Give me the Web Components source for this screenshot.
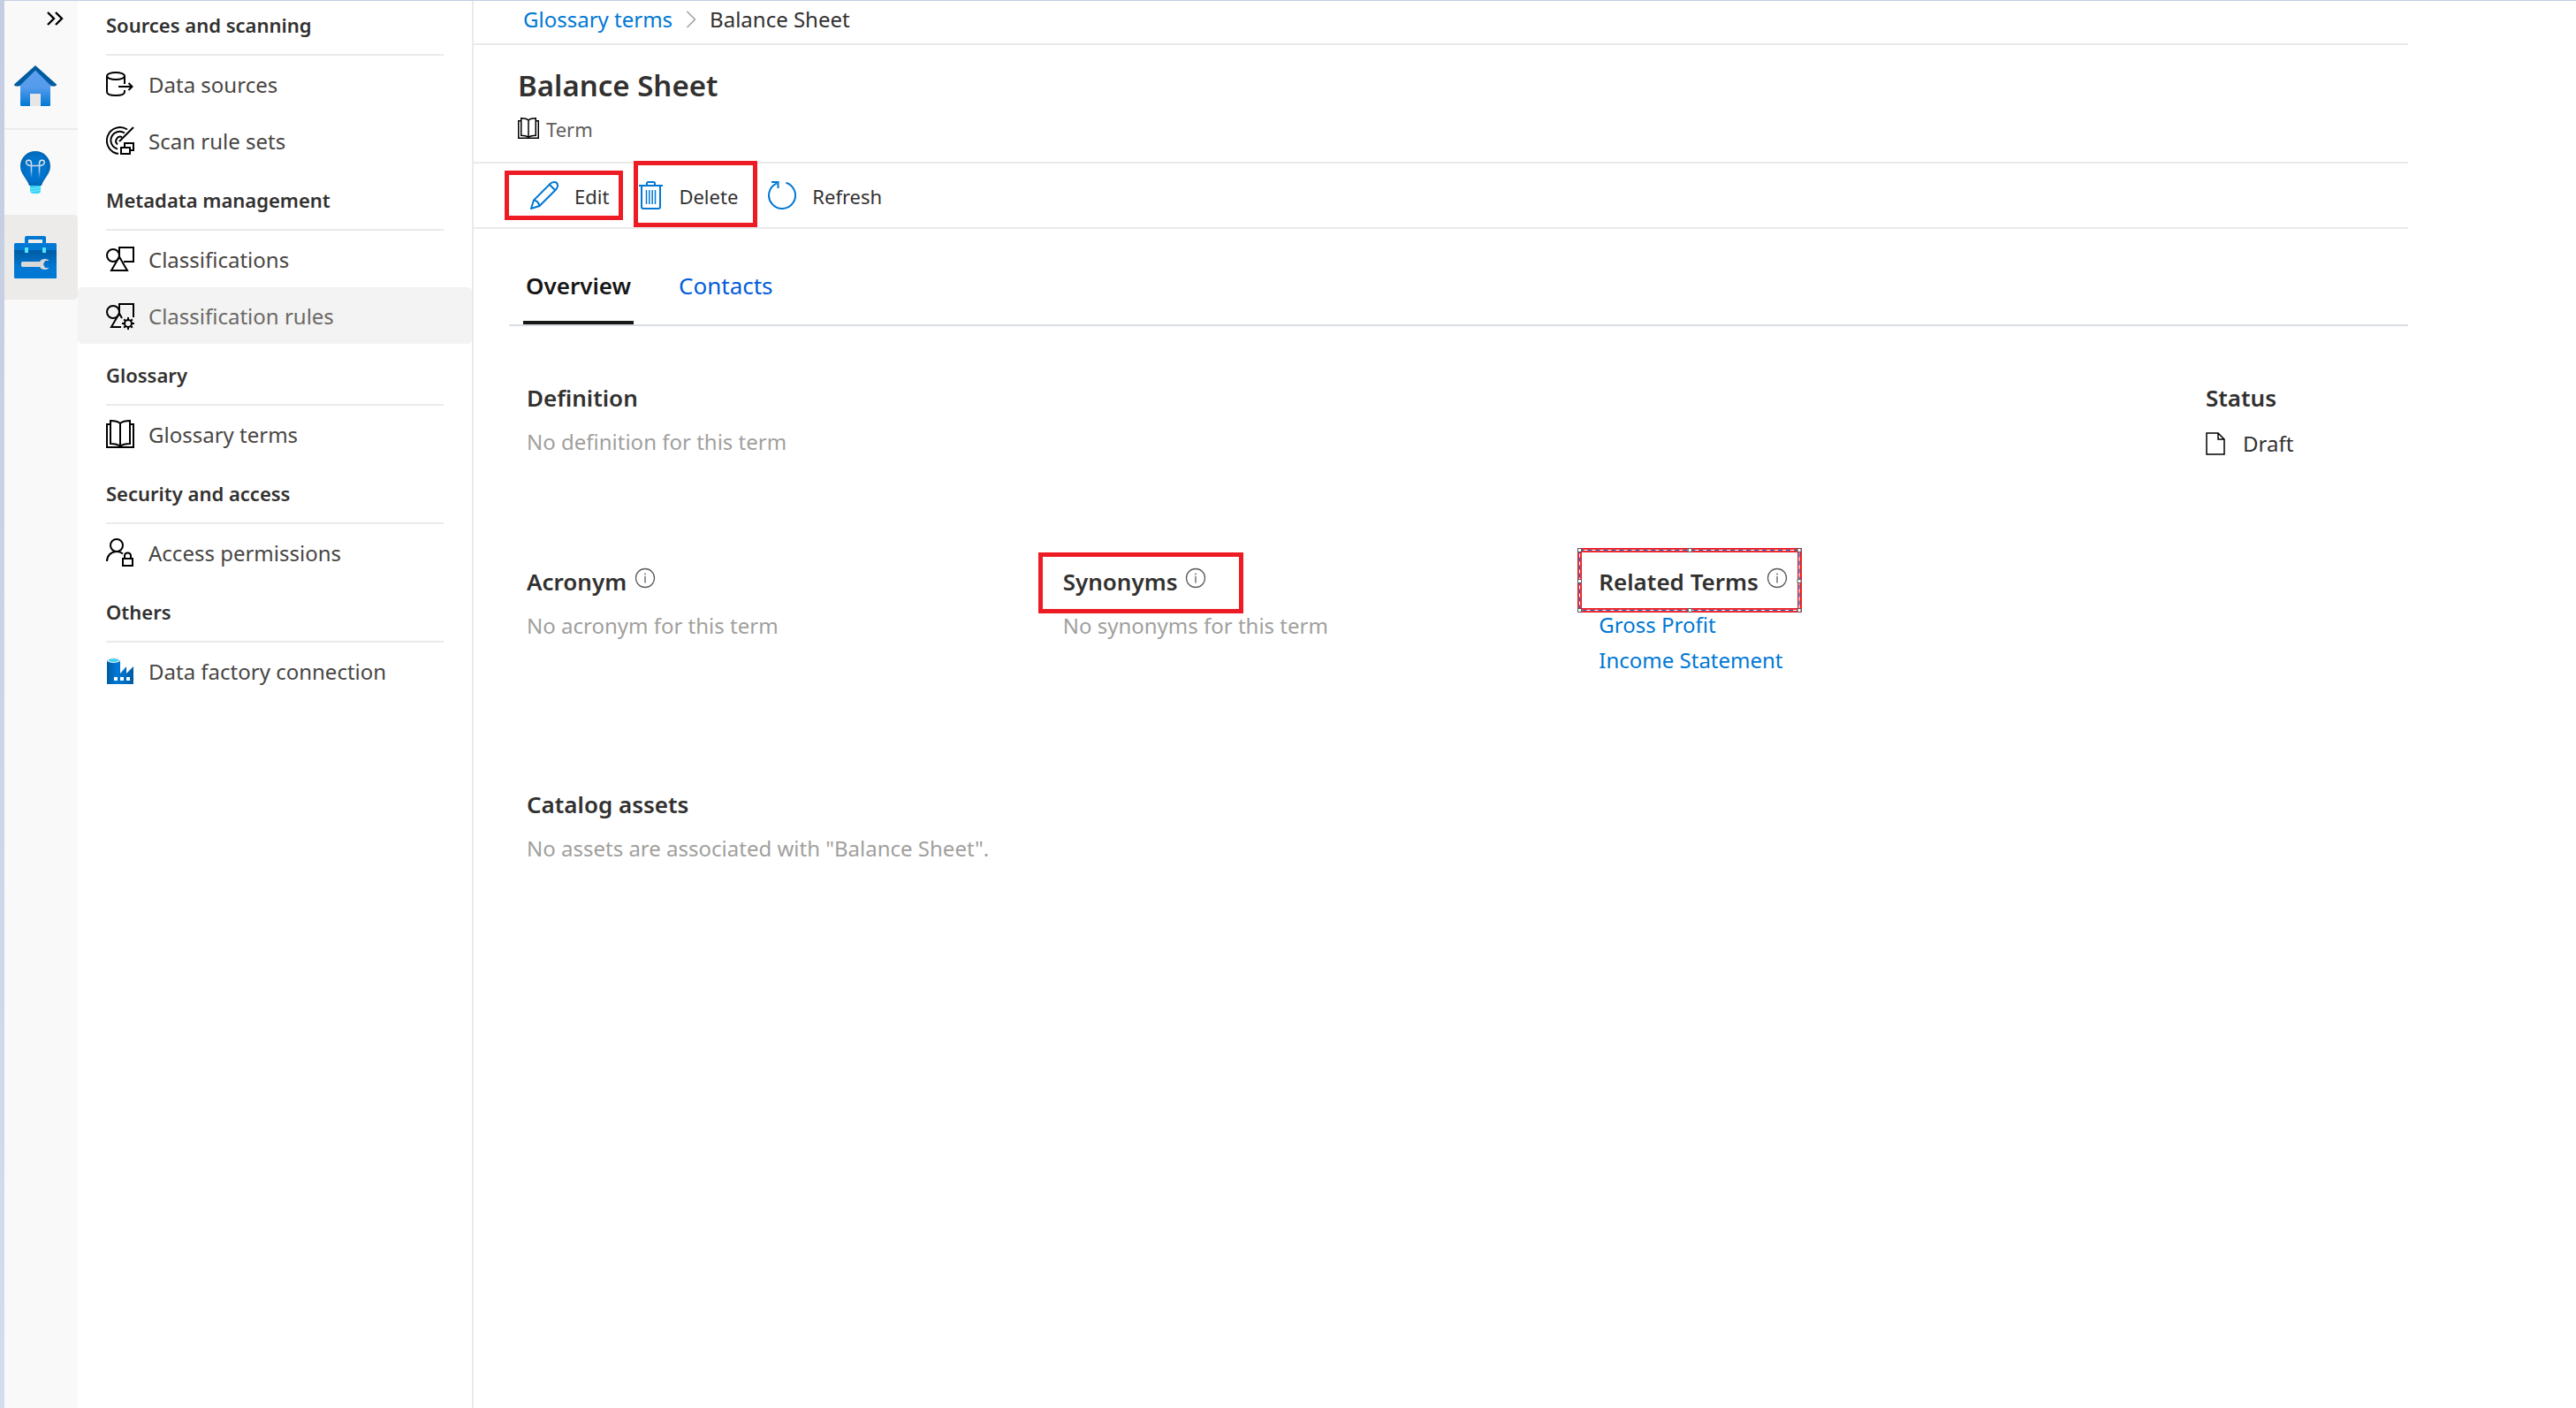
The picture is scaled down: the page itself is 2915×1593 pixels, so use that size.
<!DOCTYPE html>
<html lang="en">
<head>
<meta charset="utf-8">
<title>Balance Sheet - Glossary terms</title>
<style>
html, body { margin: 0; min-height: 100%; background: #fff; }
body { font-family: "Noto Sans", "Open Sans", sans-serif; font-size: 24px; line-height: 36px; color: #323130; }
</style>
</head>
<body>
<catalog-app></catalog-app>
<script>
const ICONS = {
  chevrons: [20, 16, '<path d="M2 1l7 7-7 7M11 1l7 7-7 7" fill="none" stroke="#000" stroke-width="2.4"/>'],
  home: [48, 48, '<defs><linearGradient id="h" x1="0" y1="0" x2="0" y2="1"><stop offset="0" stop-color="#5ea0ef"/><stop offset=".5" stop-color="#559bec"/><stop offset="1" stop-color="#0078d4"/></linearGradient></defs><path d="M7 23L24 5l17 18v22.500q0 1.500-1.500 1.500H8.500Q7 47 7 45.500z" fill="url(#h)"/><path d="M24 1L0 22.500q0 2 2 2h4L24 6.500l18 18h4q2 0 2-2z" fill="#005ba1"/><path d="M18 33h12v14H18z" fill="#e6e6e6"/>'],
  bulb: [48, 48, '<defs><radialGradient id="b" cx=".5" cy=".5" r=".65"><stop offset="0" stop-color="#0078d4"/><stop offset=".5" stop-color="#0074cd"/><stop offset="1" stop-color="#005ba1"/></radialGradient><linearGradient id="f" x1="0" y1="0" x2="0" y2="1"><stop offset="0" stop-color="#e6e6e6"/><stop offset=".6" stop-color="#b4c8e8"/><stop offset="1" stop-color="#0078d4"/></linearGradient></defs><path d="M41 17C41 7.500 33.500 0 24 0S7 7.500 7 17c0 9 7 13 10 22h14c3-9 10-13 10-22z" fill="url(#b)"/><path d="M19.500 30V14c0-6-7.500-4-5.500 0 1.500 3 5 2.500 10 2.500s8.500.500 10-2.500c2-4-5.500-6-5.500 0v16" fill="none" stroke="url(#f)" stroke-width="1.600"/><path d="M18 39h12v6q0 3-4 3h-4q-4 0-4-3z" fill="#32d4f5"/><path d="M18 43l12-2M18 46l12-2" stroke="#9cebff" stroke-width=".8"/>'],
  toolbox: [48, 48, '<defs><linearGradient id="t" x1="0" y1="0" x2="0" y2="1"><stop offset="0" stop-color="#005ba1"/><stop offset=".6" stop-color="#0078d4"/></linearGradient></defs><path d="M0 16h48v32H1.500Q0 48 0 46.500z" fill="url(#t)"/><path d="M1.500 8H12V2q0-2 2-2h20q2 0 2 2v6h10.500Q48 8 48 9.500V16H0V9.500Q0 8 1.500 8z" fill="#0078d4"/><path d="M16 4h16v4H16z" fill="#ecebe9"/><path d="M12 13h4v6h-4zM32 13h4v6h-4z" fill="#50e6ff"/><path d="M9.500 29H29c1-2 3-3 5.500-3 2 0 3.500.500 5 2h-4.500l-2 4 2 4h4.500c-1.500 1.500-3 2-5 2-2.500 0-4.500-1-5.500-3H9.500Q8 35 8 33.500v-3Q8 29 9.500 29z" fill="#d8d8d8"/>'],
  sources: [32, 32, '<g fill="none" stroke="#000" stroke-width="2"><ellipse cx="11" cy="7" rx="10" ry="4"/><path d="M1 7v18c0 2.500 4 4 10 4s10-1.500 10-4v-2M21 7v9M14 19h15M25.500 15l4 4-4 4"/></g>'],
  scan: [32, 32, '<g fill="none" stroke="#000" stroke-width="2"><path d="M24 3.500A15 15 0 1 0 14 31M21 7.500A10 10 0 1 0 13 25.500M18 12A5 5 0 0 0 13 20.500M15 17L31 1M17 24h10v7H17zM21 23v-4h10v8h-4"/></g>'],
  classes: [32, 32, '<g fill="none" stroke="#000" stroke-width="2"><circle cx="8" cy="12" r="7"/><path d="M15 12V3h16v16H20M15 13.500L24 29H6z"/></g>'],
  rules: [32, 32, '<g fill="none" stroke="#000" stroke-width="2"><circle cx="8" cy="12" r="7"/><path d="M15 12V3h16v15M18 19l-3-5.500L6 29h11"/><circle cx="25" cy="25" r="4"/><path d="M25 21v-3M25 29v3M21 25h-3M29 25h3M22.200 22.200l-2-2M27.800 27.800l2 2M22.200 27.800l-2 2M27.800 22.200l2-2"/></g>'],
  book: [32, 32, '<g fill="none" stroke="#000" stroke-width="2"><path d="M5 5H1v26h30V5h-4"/><path d="M16 4C13 1.500 9 1 5 1v26c4 0 8 .500 11 3 3-2.500 7-3 11-3V1c-4 0-8 .500-11 3zM16 4v26"/></g>'],
  access: [32, 32, '<g fill="none" stroke="#000" stroke-width="2"><circle cx="12" cy="8" r="7"/><path d="M1 26c0-6 4.500-11 11-11 3 0 5 .800 7 2.500M19 23h11v8H19zM21 23v-3q0-3.500 3.500-3.500T28 20v3"/></g>'],
  factory: [32, 32, '<defs><linearGradient id="d"><stop offset="0" stop-color="#005ba1"/><stop offset=".35" stop-color="#0078d4"/><stop offset=".6" stop-color="#0072c9"/><stop offset="1" stop-color="#005ba1"/></linearGradient></defs><path d="M1 4h15v15l7-8v8l8-8v20H1z" fill="url(#d)"/><ellipse cx="8.500" cy="4" rx="7.500" ry="3" fill="#e8e8e8"/><ellipse cx="8.500" cy="4" rx="5.500" ry="1.800" fill="#32d4f5"/><path d="M9 23h4v4H9zM16 23h4v4h-4zM23 23h4v4h-4z" fill="#fff"/>'],
  edit: [32, 32, '<g fill="none" stroke="#0078d4" stroke-width="2"><path d="M1 31l3-9.500L23 2.500q2-1.500 4-1.500 4 0 4 4 0 2-1.500 4L10.500 28zM22 4l6.500 6.500M4 21.500q5 .500 6.500 6.500"/></g>'],
  trash: [27, 32, '<g fill="none" stroke="#0078d4" stroke-width="2"><path d="M0 5h27M9 5V2.500Q9 1 10.500 1h6Q18 1 18 2.500V5M3 5v24q0 2 2 2h17q2 0 2-2V5"/><path d="M8.500 10v16M11.800 10v16M15.200 10v16M18.500 10v16" stroke-width="1.500"/></g>'],
  refresh: [32, 32, '<path d="M20.500 1.700A15 15 0 1 1 10 2.300M4 1h7.500v7" fill="none" stroke="#0078d4" stroke-width="2"/>'],
  info: [24, 24, '<circle cx="12" cy="12" r="10.500" fill="none" stroke="#605e5c" stroke-width="1.300"/><path d="M12 10v7.500M12 6.500v2" stroke="#605e5c" stroke-width="1.300"/>'],
  page: [22, 26, '<path d="M1 1h13l7 7v17H1zM14 1v7h7" fill="none" stroke="#000" stroke-width="1.500"/>'],
  crumb: [12, 20, '<path d="M1.500 1l9 9-9 9" fill="none" stroke="#a19f9d" stroke-width="1.500"/>']
};

function define(name, css, html, setup) {
  const template = document.createElement('template');
  template.innerHTML = `<style>*{box-sizing:border-box}${css}</style>${html}`;
  customElements.define(name, class extends HTMLElement {
    connectedCallback() {
      if (this.shadowRoot) return;
      this.attachShadow({ mode: 'open' }).append(template.content.cloneNode(true));
      if (setup) setup(this, this.shadowRoot);
    }
  });
}

function makeIcon(name) {
  const icon = document.createElement('ui-icon');
  icon.setAttribute('name', name);
  return icon;
}

define('ui-icon', ':host{display:block;flex:none}svg{display:block}', '', (host, root) => {
  const [w, h, body] = ICONS[host.getAttribute('name')];
  const size = Number(host.getAttribute('size')) || h;
  const holder = document.createElement('div');
  holder.innerHTML = `<svg width="${Math.round(w * size / h)}" height="${size}" viewBox="0 0 ${w} ${h}" aria-hidden="true">${body}</svg>`;
  root.append(holder);
});

/* Red call-out frame laid over whatever it wraps. */
define('call-out', `
:host{display:block;position:relative}
.frame{position:absolute;inset:var(--frame);border:5px solid #ed1c24;pointer-events:none}
.marks{display:none;position:absolute;top:-5px;left:-5px;width:calc(100% + 10px);height:calc(100% + 10px);overflow:visible}
:host([selected]) .marks{display:block}
`, `<slot></slot><div class="frame">
<svg class="marks" viewBox="0 0 254 73" preserveAspectRatio="none" aria-hidden="true">
<rect x="2.500" y="2.500" width="249" height="68" fill="none" stroke="#fff" stroke-width="1.200"/>
<rect x="2.500" y="2.500" width="249" height="68" fill="none" stroke="#0078d7" stroke-width="1.200" stroke-dasharray="5 4"/>
<g fill="#fff" stroke="#555" stroke-width="1"><path d="M.5.500h4v4h-4zM125.500.500h4v4h-4zM249.500.500h4v4h-4zM.5 35.500h4v4h-4zM249.500 35.500h4v4h-4zM.5 68.500h4v4h-4zM125.500 68.500h4v4h-4zM249.500 68.500h4v4h-4z"/></g>
</svg></div>`);

define('rail-item', `
:host{display:block}
button{display:flex;align-items:center;width:100%;height:96px;padding:0 0 0 11px;border:0;background:none;border-radius:0 5px 5px 0}
:host([selected]) button{background:#ecebe9}
:host([divided]){border-bottom:2px solid #eaeaea}
`, '<button><slot></slot></button>', (h, r) => r.querySelector('button').setAttribute('aria-label', h.getAttribute('label')));

define('app-rail', `
:host{display:block;flex:none;width:83px;background:#f9f9f9}
.toggle{display:flex;justify-content:flex-end;align-items:flex-start;width:100%;height:48px;border:0;padding:12px 16px 0 0;background:none}
`, `<button class="toggle" aria-label="Expand"><ui-icon name="chevrons"></ui-icon></button>
<rail-item divided label="Home"><ui-icon name="home"></ui-icon></rail-item>
<rail-item label="Insights"><ui-icon name="bulb"></ui-icon></rail-item>
<rail-item selected label="Management"><ui-icon name="toolbox"></ui-icon></rail-item>`);

define('nav-group', `
:host{display:block}
h2{margin:0 32px;padding:17px 0 15px;border-bottom:2px solid #eaeaea;font-size:22px;line-height:36px;font-weight:600;color:#323130}
:host(:first-child) h2{padding-top:9px}
`, '<h2></h2><slot></slot>', (h, r) => r.querySelector('h2').textContent = h.getAttribute('heading'));

define('nav-link', `
:host{display:block}
a{display:flex;align-items:center;gap:16px;height:64px;padding:0 32px;color:#484644;text-decoration:none;border-radius:5px;white-space:nowrap}
span{padding-top:2px}
:host([active]) a{background:#f3f3f3;color:#6a6967}
`, '<a href="#"><span><slot></slot></span></a>', (h, r) => r.querySelector('a').prepend(makeIcon(h.getAttribute('icon'))));

define('side-nav', ':host{display:block;flex:none;width:448px;border-right:2px solid #eaeaea}', `<nav>
<nav-group heading="Sources and scanning"><nav-link icon="sources">Data sources</nav-link><nav-link icon="scan">Scan rule sets</nav-link></nav-group>
<nav-group heading="Metadata management"><nav-link icon="classes">Classifications</nav-link><nav-link icon="rules" active>Classification rules</nav-link></nav-group>
<nav-group heading="Glossary"><nav-link icon="book">Glossary terms</nav-link></nav-group>
<nav-group heading="Security and access"><nav-link icon="access">Access permissions</nav-link></nav-group>
<nav-group heading="Others"><nav-link icon="factory">Data factory connection</nav-link></nav-group>
</nav>`);

define('bread-crumbs', `
:host{display:flex;align-items:center;gap:15px;height:50px;padding:0 0 6px 56px;border-bottom:2px solid #eaeaea}
a{color:#0078d4;text-decoration:none}
`, '<a href="#">Glossary terms</a><ui-icon name="crumb"></ui-icon><span>Balance Sheet</span>');

define('term-title', `
:host{display:block;height:134px;padding:22px 0 0 50px;border-bottom:2px solid #eaeaea}
h1{margin:0;font-size:33px;line-height:48px;font-weight:600}
div{display:flex;align-items:center;gap:8px;margin-top:5px;font-size:22px;color:#605e5c}
span{padding-top:2px}
`, '<h1>Balance Sheet</h1><div><ui-icon name="book" size="24"></ui-icon><span>Term</span></div>');

define('command-button', `
:host{display:block}
button{display:flex;align-items:center;gap:18px;border:0;padding:0;background:none;font:inherit;font-size:22px;line-height:36px;color:#323130}
span{padding-top:2px}
`, '<button><span><slot></slot></span></button>', (h, r) => r.querySelector('button').prepend(makeIcon(h.getAttribute('icon'))));

define('command-bar', `
:host{display:flex;align-items:center;gap:34px;height:74px;padding-left:64px;border-bottom:2px solid #eaeaea}
.edit{--frame:-9px -16px -9px -29px}
.delete{--frame:-20px -22px -17px -6px}
`, `<call-out class="edit"><command-button icon="edit">Edit</command-button></call-out>
<call-out class="delete"><command-button icon="trash">Delete</command-button></call-out>
<command-button icon="refresh">Refresh</command-button>`);

define('tab-strip', `
:host{display:flex;gap:48px;margin-left:40px;padding:32px 0 0 16px;border-bottom:2px solid #dadde4}
button{border:0;border-bottom:4px solid transparent;background:none;padding:13px 3px 21px;font:inherit;font-size:26px;line-height:38px;color:#015cda}
button[aria-selected=true]{border-color:#171717;color:#171717;font-weight:600}
`, '<button role="tab" aria-selected="true">Overview</button><button role="tab" aria-selected="false">Contacts</button>');

define('term-field', `
:host{display:block}
header{display:flex;align-items:center;gap:9px;width:max-content}
h3{margin:0;font-size:26px;line-height:38px;font-weight:600}
ui-icon{padding-bottom:8px}
.body{margin-top:12px;color:#a19f9d;line-height:38px}
:host([framed=synonyms]) call-out{--frame:-14px -42px -17px -28px}
:host([framed=related]) call-out{--frame:-19px -16px -16px -24px}
call-out{width:max-content}
`, '<header><h3></h3></header><div class="body"><slot></slot></div>', (h, r) => {
  const header = r.querySelector('header');
  r.querySelector('h3').textContent = h.getAttribute('heading');
  if (h.hasAttribute('info')) header.append(makeIcon('info'));
  if (h.hasAttribute('framed')) {
    const frame = document.createElement('call-out');
    if (h.getAttribute('framed') === 'related') frame.setAttribute('selected', '');
    header.replaceWith(frame);
    frame.append(header);
  }
});

define('term-overview', `
:host{display:flex;gap:80px;padding:62px 0 0 60px}
.fields{flex:1;display:grid;grid-template-columns:repeat(3,1fr);row-gap:120px}
.wide{grid-column:1/-1}
.status{width:229px}
.draft{display:flex;align-items:center;gap:20px;color:#323130;padding-top:2px}
.links{display:flex;flex-direction:column;line-height:40px;margin-top:-2px;padding-bottom:4px}
.links a{color:#0078d4;text-decoration:none}
`, `<div class="fields">
<term-field class="wide" heading="Definition">No definition for this term</term-field>
<term-field heading="Acronym" info>No acronym for this term</term-field>
<term-field heading="Synonyms" info framed="synonyms">No synonyms for this term</term-field>
<term-field heading="Related Terms" info framed="related"><div class="links"><a href="#">Gross Profit</a><a href="#">Income Statement</a></div></term-field>
<term-field class="wide" heading="Catalog assets">No assets are associated with "Balance Sheet".</term-field>
</div>
<term-field class="status" heading="Status"><div class="draft"><ui-icon name="page"></ui-icon>Draft</div></term-field>`);

define('catalog-app', `
:host{display:flex;min-height:100vh;box-sizing:border-box;border-top:1px solid #c4cfe2}
.edge{flex:none;width:5px;background:linear-gradient(#c4cde1,#d3dded)}
main{flex:1;min-width:0;padding-right:190px}
`, `<div class="edge"></div><app-rail></app-rail><side-nav></side-nav>
<main><bread-crumbs></bread-crumbs><term-title></term-title><command-bar></command-bar><tab-strip></tab-strip><term-overview></term-overview></main>`);
</script>
</body>
</html>
